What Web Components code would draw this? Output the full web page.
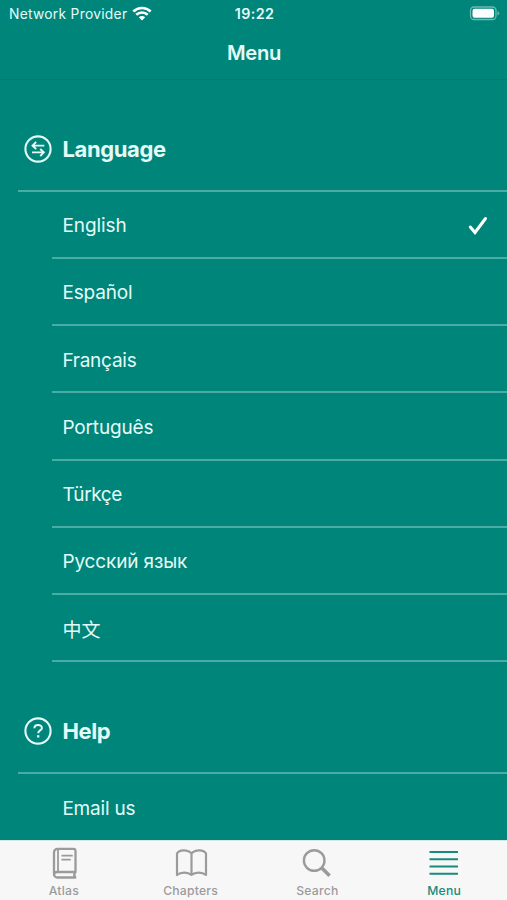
<!DOCTYPE html>
<html lang="en">
<head>
<meta charset="utf-8">
<title>Menu</title>
<style>
html,body{margin:0;height:100%;background:#00857a}
body{overflow:hidden;font-family:Inter,"Noto Sans CJK SC",sans-serif}
</style>
</head>
<body>
<app-screen>
  <status-bar slot="top"></status-bar>
  <nav-bar slot="top">Menu</nav-bar>
  <menu-section label="Language" icon="swap">
    <menu-row selected style="--ls:-.08px">English</menu-row>
    <menu-row>Español</menu-row>
    <menu-row style="--ls:-.25px">Français</menu-row>
    <menu-row>Português</menu-row>
    <menu-row style="--ls:-.4px">Türkçe</menu-row>
    <menu-row>Русский язык</menu-row>
    <menu-row style="--ls:.2px">中文</menu-row>
  </menu-section>
  <menu-section label="Help" icon="help">
    <menu-row last style="--ls:-.2px">Email us</menu-row>
  </menu-section>
  <tab-bar slot="bottom">
    <tab-item icon="atlas">Atlas</tab-item>
    <tab-item icon="book">Chapters</tab-item>
    <tab-item icon="search">Search</tab-item>
    <tab-item icon="menu" active>Menu</tab-item>
  </tab-bar>
</app-screen>
<script>
const icons = {
  swap: '<svg width="28" height="28" viewBox="0 0 28 28" fill="none" stroke="currentColor" stroke-width="2.1"><circle cx="14" cy="14" r="12.6"/><path stroke-width="1.9" d="M20.3 10.6H8.7M12.2 6.900 8.500 10.600l3.700 3.400M8 17.400h12M16.200 14l3.600 3.400-3.600 3.700"/></svg>',
  help: '<svg width="28" height="28" viewBox="0 0 28 28" fill="none" stroke="currentColor" stroke-width="2.1"><circle cx="14" cy="14" r="12.6"/><path stroke-width="2" d="M10.400 11.200c0-4.300 7.500-4.200 7.500-.3 0 2.600-3.700 2.500-3.700 5.300"/><path stroke-width="2.300" d="M14.200 18.200v2.300"/></svg>',
  atlas: '<svg width="28" height="34" viewBox="0 0 28 34" fill="none" stroke="currentColor" stroke-width="2.300" stroke-linejoin="round" stroke-linecap="round"><path d="M25.500 26V5a2.200 2.200 0 0 0-2.200-2.200H7.500A3.500 3.500 0 0 0 4 6.300v21.900a3.300 3.300 0 0 0 3.300 3.300h18l-1.200-2.800 1.400-2.700H7a3 3 0 0 0-3 2.500"/><path stroke-width="1.800" d="M8 3.500v22M12.200 9.700h9.800M12.200 13.700h7.800"/></svg>',
  book: '<svg width="34" height="34" viewBox="0 0 34 34" fill="none" stroke="currentColor" stroke-width="2.200" stroke-linejoin="round"><path d="M17.500 7.500v21.300C14 26 7 25.500 3 29V7.500C5 3.400 14 3.200 17.500 7.500 21 3.200 30 3.400 32 7.500V29c-4-3.500-11-3-14.500-.2"/></svg>',
  search: '<svg width="32" height="34" viewBox="0 0 32 34" fill="none" stroke="currentColor"><circle cx="13.200" cy="14.500" r="10.300" stroke-width="2.400"/><path stroke-width="3.600" d="m20.600 21.700 8 8"/></svg>',
  menu: '<svg width="30" height="34" viewBox="0 0 30 34" stroke="currentColor" stroke-width="2.100"><path d="M.5 6H29M.5 13.200H29M.5 20.500H29M.5 27.700H29"/></svg>'
};
function define(name, render) {
  customElements.define(name, class extends HTMLElement {
    constructor() { super(); this.attachShadow({mode: 'open'}); }
    connectedCallback() { this.shadowRoot.innerHTML = render(this); }
  });
}
define('app-screen', () => `<style>
  :host{display:flex;flex-direction:column;height:900px;background:#00857a;color:#e4fbf8}
  main{flex:1;min-height:0;overflow:hidden}
  </style><slot name="top"></slot><main><slot></slot></main><slot name="bottom"></slot>`);
define('status-bar', () => `<style>
  :host{display:grid;grid-template-columns:1fr auto 1fr;align-items:center;height:27px;font-size:13.8px;padding:0 7px 0 9px}
  .left{display:flex;align-items:center;gap:5px;letter-spacing:.28px}
  .time{font-weight:600;font-size:14.300px;letter-spacing:.4px}
  .battery{justify-self:end}svg{display:block}
  </style><div class="left"><span>Network Provider</span>
  <svg width="20" height="15" viewBox="0 0 20 15" fill="none" stroke="#fff" stroke-width="2.700"><path d="M1.300 5.500c5-4.700 12.400-4.700 17.400 0M4.300 8.800c3.300-3.100 8.100-3.100 11.400 0"/><path fill="#fff" stroke="none" d="m10 14.500-3.200-3.200c1.800-1.700 4.600-1.700 6.400 0z"/></svg></div>
  <span class="time">19:22</span>
  <svg class="battery" width="31" height="15" viewBox="0 0 31 15"><rect x="1.500" y="1" width="25.500" height="12.500" rx="3.500" fill="none" stroke="#6cbab2" stroke-width="1.300"/><rect x="3.500" y="2.800" width="21.500" height="9" rx="2" fill="#fff"/><path d="M28.500 5.200v4.200q1.800-.5 1.800-2.100t-1.800-2.100" fill="#6cbab2"/></svg>`);
define('nav-bar', () => `<style>
  :host{display:flex;justify-content:center;align-items:center;box-sizing:border-box;height:53px;padding:0 0 1px 1px;border-bottom:1px solid #007d72;font-size:20.200px;font-weight:600;letter-spacing:-.3px}
  </style><slot></slot>`);
define('menu-section', el => `<style>
  :host{display:block}
  header{display:flex;align-items:center;box-sizing:border-box;height:112px;margin-left:18px;padding:28px 0 0 5.500px;gap:11px;border-bottom:2px solid #4aaca4}
  h2{margin:0;font-size:22px;line-height:28px;font-weight:700;letter-spacing:-.4px}
  svg{display:block}
  </style><header>${icons[el.getAttribute('icon')]}<h2>${el.getAttribute('label')}</h2></header><slot></slot>`);
define('menu-row', el => `<style>
  :host{display:flex;align-items:center;justify-content:space-between;box-sizing:border-box;height:67.170px;margin-left:52px;padding:2.500px 18px 0 10.400px;border-bottom:2px solid #4aaca4;font-size:19px;letter-spacing:var(--ls,-.14px)}
  :host([last]){border-bottom-color:transparent;padding-top:3px}
  </style><span><slot></slot></span>${el.hasAttribute('selected') ? '<svg width="22" height="22" viewBox="0 0 22 22" fill="none" stroke="#fff" stroke-width="3" stroke-linecap="round"><path d="m3.300 12 4.700 5.500L18.500 3.500"/></svg>' : ''}`);
define('tab-bar', () => `<style>
  :host{display:grid;grid-template-columns:repeat(4,1fr);box-sizing:border-box;height:60px;background:#f7f7f7;border-top:1px solid #d5e5e3}
  </style><slot></slot>`);
define('tab-item', el => `<style>
  :host{display:flex;flex-direction:column;align-items:center;padding:5px 0 0 1px;color:#9b9b9b;font-size:12.200px;line-height:16px;font-weight:500;letter-spacing:.22px;gap:3px}
  :host([active]){color:#188a7d}svg{display:block}
  </style>${icons[el.getAttribute('icon')]}<span><slot></slot></span>`);
</script>
</body>
</html>
